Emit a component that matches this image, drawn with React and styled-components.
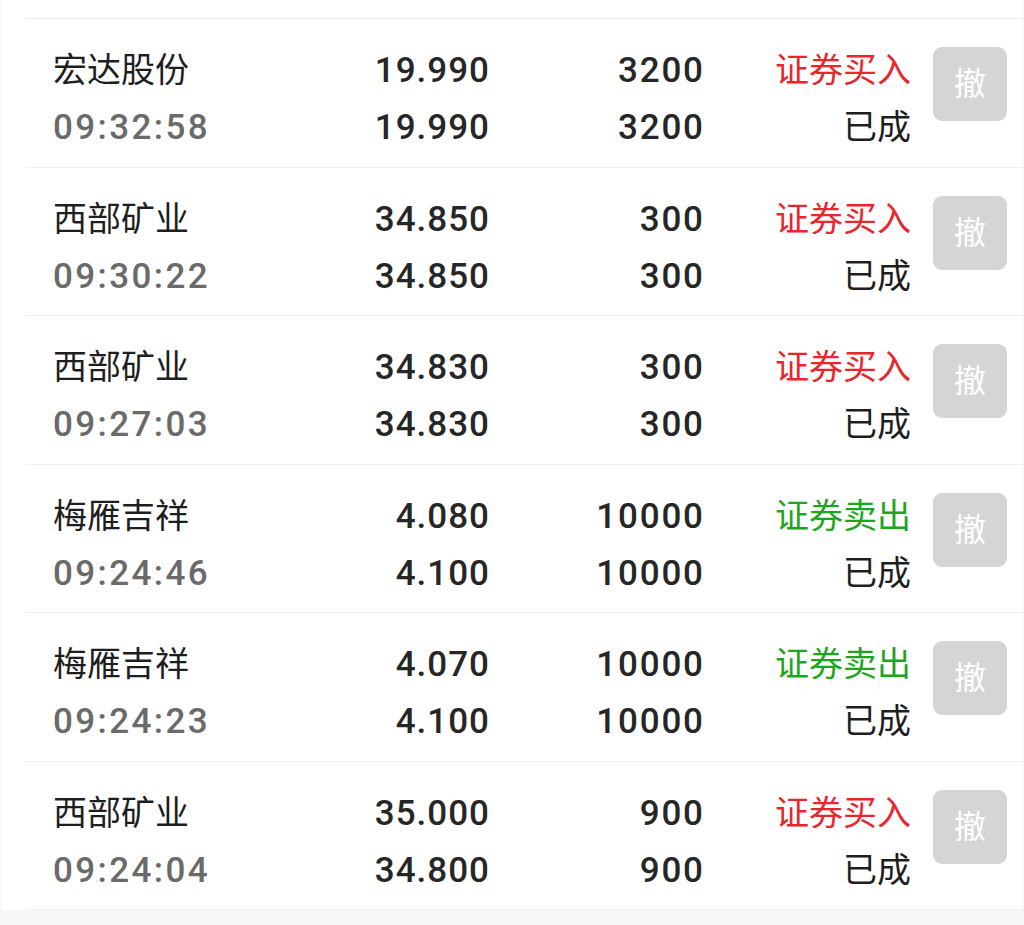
import styled, { createGlobalStyle } from "styled-components";

const GlobalStyle = createGlobalStyle`
  html, body {
    margin: 0;
    padding: 0;
    background: #f4f6f8;
  }
  body {
    font-family: Roboto, "Noto Sans CJK SC", sans-serif;
  }
`;

const orders = [
  { name: "宏达股份", time: "09:32:58", price: "19.990", dealPrice: "19.990", qty: "3200", dealQty: "3200", side: "buy" },
  { name: "西部矿业", time: "09:30:22", price: "34.850", dealPrice: "34.850", qty: "300", dealQty: "300", side: "buy" },
  { name: "西部矿业", time: "09:27:03", price: "34.830", dealPrice: "34.830", qty: "300", dealQty: "300", side: "buy" },
  { name: "梅雁吉祥", time: "09:24:46", price: "4.080", dealPrice: "4.100", qty: "10000", dealQty: "10000", side: "sell" },
  { name: "梅雁吉祥", time: "09:24:23", price: "4.070", dealPrice: "4.100", qty: "10000", dealQty: "10000", side: "sell" },
  { name: "西部矿业", time: "09:24:04", price: "35.000", dealPrice: "34.800", qty: "900", dealQty: "900", side: "buy" },
];

const App = () => {
  return (
    <>
      <GlobalStyle />
      <Page>
        <List>
          {orders.map((o, i) => (
            <Row key={i}>
              <Cell>
                <Name>{o.name}</Name>
                <Time>{o.time}</Time>
              </Cell>
              <Cell $right>
                <Num $spacing={1}>{o.price}</Num>
                <Num $spacing={1}>{o.dealPrice}</Num>
              </Cell>
              <Cell $right>
                <Num $spacing={1.8}>{o.qty}</Num>
                <Num $spacing={1.8}>{o.dealQty}</Num>
              </Cell>
              <Cell $right>
                <Side $side={o.side}>{o.side === "buy" ? "证券买入" : "证券卖出"}</Side>
                <Status>已成</Status>
              </Cell>
              <CancelButton>撤</CancelButton>
            </Row>
          ))}
        </List>
      </Page>
    </>
  );
};

const Page = styled.div`
  background: #ffffff;
  padding-top: 18px;
  border-left: 1px solid #f4f4f4;
  border-right: 1px solid #f4f4f4;
  box-sizing: border-box;
`;

const List = styled.div`
  margin-left: 24px;
  border-top: 1px solid #efefef;
`;

const Row = styled.div`
  display: grid;
  grid-template-columns: 236px 200px 214px 208px 74px;
  align-items: start;
  height: 148.5px;
  box-sizing: border-box;
  padding: 23px 0 0 28px;
  border-bottom: 1px solid #efefef;
`;

const Cell = styled.div`
  display: flex;
  flex-direction: column;
  align-items: ${(p) => (p.$right ? "flex-end" : "flex-start")};
  line-height: 57px;
  font-size: 35px;
  font-weight: 500;
  color: #222222;
`;

const Name = styled.span`
  font-size: 34px;
  font-weight: 400;
  color: #1e1e1e;
`;

const Time = styled.span`
  color: #6a6a6a;
  letter-spacing: 2.4px;
`;

const Num = styled.span`
  letter-spacing: ${(p) => p.$spacing}px;
  margin-right: -${(p) => p.$spacing}px;
  color: #262626;
`;

const Side = styled.span`
  font-size: 34px;
  font-weight: 400;
  color: ${(p) => (p.$side === "buy" ? "#e8262b" : "#1ea51e")};
`;

const Status = styled.span`
  font-size: 34px;
  font-weight: 400;
  color: #1e1e1e;
`;

const CancelButton = styled.div`
  margin-left: 22px;
  margin-top: 5px;
  width: 74px;
  height: 74px;
  border-radius: 9px;
  background: #d5d5d5;
  color: #ffffff;
  font-size: 32px;
  font-weight: 400;
  line-height: 1;
  display: flex;
  align-items: center;
  justify-content: center;
  grid-column: 5;
`;

export default App;
